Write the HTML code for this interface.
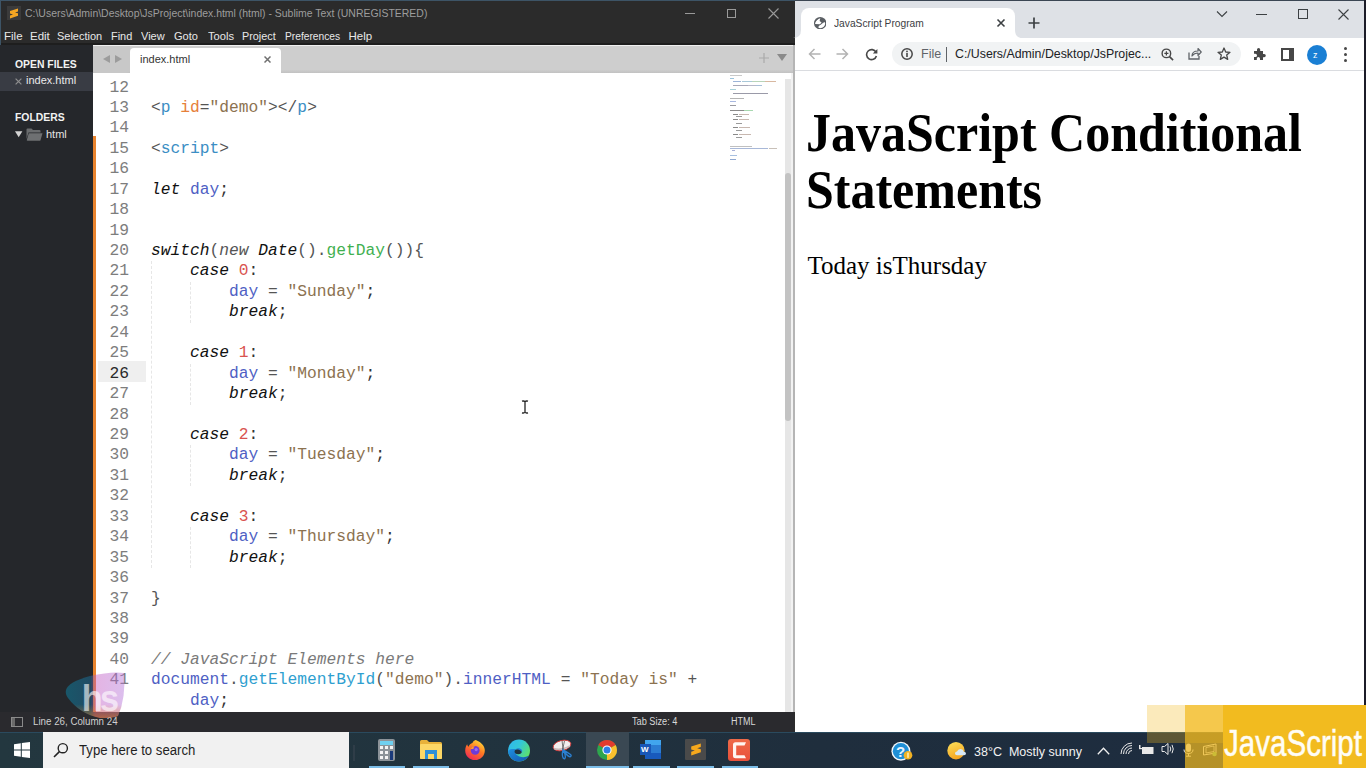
<!DOCTYPE html>
<html><head><meta charset="utf-8">
<style>
*{box-sizing:border-box}
html,body{margin:0;padding:0}
body{width:1366px;height:768px;position:relative;overflow:hidden;background:#fff;font-family:"Liberation Sans",sans-serif}
.a{position:absolute}
.t{position:absolute;white-space:pre;line-height:1}
#sub{left:0;top:0;width:795px;height:732px;background:#2b2b2b}
#menu span{position:absolute;top:0;color:#e8e8e8;font-size:11.5px;line-height:1;white-space:pre;transform-origin:0 0}
#side{left:0;top:45px;width:93px;height:667px;background:#25272b}
#tabbar{left:93px;top:45px;width:701px;height:28px;background:#cecece;border-top:1px solid #f0f0f0}
#ed{left:93px;top:73px;width:701px;height:639px;background:#fff;overflow:hidden}
.ln{position:absolute;left:0;width:36px;text-align:right;font-family:"Liberation Mono",monospace;font-size:16.25px;color:#7d7d7d;white-space:pre;line-height:20px}
.cl{position:absolute;left:58px;font-family:"Liberation Mono",monospace;font-size:16.25px;color:#333;white-space:pre;line-height:20px}
.kw{font-style:italic;color:#111}
.ng{font-style:italic;color:#555}
.tg{color:#3b8ec4}
.at{color:#e6803a}
.st{color:#8c7250}
.fn{color:#3fb050}
.vr{color:#4f5fc4}
.nm{color:#d9534f}
.cm{color:#7a7a7a;font-style:italic}
.pn{color:#555}
.gf{color:#2f9fd0}
#status{left:0;top:712px;width:794px;height:20px;background:#2a2a2e}
#chr{left:795px;top:0;width:571px;height:732px;background:#fff}
#task{left:0;top:732px;width:1366px;height:36px;background:linear-gradient(90deg,#23373f 0%,#21333e 35%,#1f2e3d 60%,#1d2c40 100%)}
</style></head>
<body>
<!-- ============ SUBLIME ============ -->
<div id="sub" class="a">
  <div class="a" style="left:0;top:0;width:795px;height:1px;background:#3d5466"></div>
  <div class="a" style="left:0;top:0;width:1px;height:732px;background:#3d5466"></div>
  <!-- icon -->
  <div class="a" style="left:7px;top:6px;width:14px;height:14px;background:#3b3b3b"></div>
  <svg class="a" style="left:9px;top:8px" width="10" height="11" viewBox="0 0 10 11"><path d="M1 3 L9 0.4 L9 3.4 L6 4.4 L9 5.2 L9 7.8 L1 10.4 L1 7.4 L4 6.4 L1 5.6 Z" fill="#f5a623"/></svg>
  <div class="t" style="left:24.5px;top:8px;font-size:11.5px;color:#9d9d9d;transform:scaleX(0.909);transform-origin:0 0">C:\Users\Admin\Desktop\JsProject\index.html (html) - Sublime Text (UNREGISTERED)</div>
  <!-- window controls -->
  <div class="a" style="left:685px;top:13px;width:10px;height:1px;background:#9a9a9a"></div>
  <div class="a" style="left:727px;top:9px;width:9px;height:9px;border:1px solid #9a9a9a"></div>
  <svg class="a" style="left:768px;top:8px" width="11" height="11" viewBox="0 0 11 11"><path d="M0.5 0.5 L10.5 10.5 M10.5 0.5 L0.5 10.5" stroke="#9a9a9a" stroke-width="1.1"/></svg>
  <!-- menu -->
  <div id="menu" class="a" style="left:0;top:30.5px;width:400px;height:12px">
    <span style="left:4px">File</span><span style="left:30px">Edit</span><span style="left:57px;transform:scaleX(0.955)">Selection</span><span style="left:111px;transform:scaleX(0.95)">Find</span><span style="left:141px;transform:scaleX(0.96)">View</span><span style="left:174px;transform:scaleX(0.96)">Goto</span><span style="left:208px;transform:scaleX(0.97)">Tools</span><span style="left:242px;transform:scaleX(0.94)">Project</span><span style="left:284.5px;transform:scaleX(0.89)">Preferences</span><span style="left:348.5px;transform:scaleX(1)">Help</span>
  </div>
  <div class="a" style="left:1px;top:43px;width:794px;height:2px;background:#1e1e1e"></div>
  <!-- sidebar -->
  <div id="side" class="a">
    <div class="t" style="left:15px;top:14.5px;font-size:10.4px;font-weight:bold;color:#f2f2f2">OPEN FILES</div>
    <div class="a" style="left:0;top:26.5px;width:93px;height:19px;background:#393c44"></div>
    <svg class="a" style="left:15px;top:32.5px" width="7" height="7" viewBox="0 0 7 7"><path d="M0.6 0.6 L6.4 6.4 M6.4 0.6 L0.6 6.4" stroke="#8f8f8f" stroke-width="1.2"/></svg>
    <div class="t" style="left:26px;top:30px;font-size:11px;color:#eaeaea">index.html</div>
    <div class="t" style="left:15px;top:67.5px;font-size:10.4px;font-weight:bold;color:#f2f2f2">FOLDERS</div>
    <svg class="a" style="left:15px;top:85.5px" width="8" height="7" viewBox="0 0 8 7"><path d="M0 0.3 L7.4 0.3 L3.7 6.3 Z" fill="#d4d4d4"/></svg>
    <svg class="a" style="left:26px;top:83px" width="17" height="13" viewBox="0 0 17 13"><path d="M0.5 1.5 Q0.5 0.5 1.5 0.5 L5.5 0.5 L7 2 L13.5 2 Q14.5 2 14.5 3 L14.5 4.5 L2.5 4.5 L0.5 11 Z" fill="#6a6c6e"/><path d="M2.8 5.2 L16.5 5.2 L14.5 12.2 Q14.3 12.8 13.5 12.8 L1.5 12.8 Q0.6 12.8 0.8 12 Z" fill="#6e7072"/></svg>
    <div class="t" style="left:46px;top:84px;font-size:11px;color:#e4e4e4">html</div>
  </div>
  <!-- tab bar -->
  <div id="tabbar" class="a">
    <div class="a" style="left:0;top:24px;width:701px;height:3px;background:linear-gradient(#cccccc,#c2c2c2)"></div>
    <div class="a" style="left:0;top:0;width:37px;height:27px;background:#c8c8c8;border-radius:0 0 4px 4px"></div>
    <svg class="a" style="left:9.5px;top:9px" width="19" height="8" viewBox="0 0 19 8"><path d="M0 4 L7 0 L7 8 Z M12 0 L19 4 L12 8 Z" fill="#9c9c9c"/></svg>
    <div class="a" style="left:37px;top:2px;width:151px;height:25px;background:#fff;border-radius:4px 4px 0 0"></div>
    <div class="t" style="left:47px;top:8px;font-size:11px;color:#333">index.html</div>
    <svg class="a" style="left:171px;top:10px" width="7" height="7" viewBox="0 0 7 7"><path d="M0.5 0.5 L6.5 6.5 M6.5 0.5 L0.5 6.5" stroke="#707070" stroke-width="1.5"/></svg>
    <svg class="a" style="left:666px;top:7px" width="10" height="10" viewBox="0 0 10 10"><path d="M5 0 V10 M0 5 H10" stroke="#aaa" stroke-width="1.2"/></svg>
    <svg class="a" style="left:684px;top:8px" width="10" height="8" viewBox="0 0 10 8"><path d="M0 0 H10 L5 7 Z" fill="#8a8a8a"/></svg>
  </div>
  <!-- editor -->
  <div id="ed" class="a">
    <div class="a" style="left:4.5px;top:288.06px;width:48.5px;height:20.5px;background:#efefef"></div>
    <div class="a" style="left:58px;top:188.46px;width:0;height:306.60px;border-left:1px dashed #e6e6e6"></div>
    <div class="a" style="left:97px;top:208.90px;width:0;height:40.88px;border-left:1px dashed #e6e6e6"></div>
    <div class="a" style="left:97px;top:290.66px;width:0;height:40.88px;border-left:1px dashed #e6e6e6"></div>
    <div class="a" style="left:97px;top:372.42px;width:0;height:40.88px;border-left:1px dashed #e6e6e6"></div>
    <div class="a" style="left:97px;top:454.18px;width:0;height:40.88px;border-left:1px dashed #e6e6e6"></div>
    <div class="ln" style="top:4.50px;color:#7d7d7d">12</div>
    <div class="ln" style="top:24.94px;color:#7d7d7d">13</div>
    <div class="cl" style="top:24.94px"><span class="pn">&lt;</span><span class="tg">p</span> <span class="at">id</span><span class="pn">=</span><span class="st">"demo"</span><span class="pn">&gt;&lt;/</span><span class="tg">p</span><span class="pn">&gt;</span></div>
    <div class="ln" style="top:45.38px;color:#7d7d7d">14</div>
    <div class="ln" style="top:65.82px;color:#7d7d7d">15</div>
    <div class="cl" style="top:65.82px"><span class="pn">&lt;</span><span class="tg">script</span><span class="pn">&gt;</span></div>
    <div class="ln" style="top:86.26px;color:#7d7d7d">16</div>
    <div class="ln" style="top:106.70px;color:#7d7d7d">17</div>
    <div class="cl" style="top:106.70px"><span class="kw">let</span> <span class="vr">day</span>;</div>
    <div class="ln" style="top:127.14px;color:#7d7d7d">18</div>
    <div class="ln" style="top:147.58px;color:#7d7d7d">19</div>
    <div class="ln" style="top:168.02px;color:#7d7d7d">20</div>
    <div class="cl" style="top:168.02px"><span class="kw">switch</span><span class="pn">(</span><span class="ng">new</span> <span class="kw">Date</span><span class="pn">().</span><span class="fn">getDay</span><span class="pn">()){</span></div>
    <div class="ln" style="top:188.46px;color:#7d7d7d">21</div>
    <div class="cl" style="top:188.46px">    <span class="kw">case</span> <span class="nm">0</span>:</div>
    <div class="ln" style="top:208.90px;color:#7d7d7d">22</div>
    <div class="cl" style="top:208.90px">        <span class="vr">day</span> <span class="pn">=</span> <span class="st">"Sunday"</span>;</div>
    <div class="ln" style="top:229.34px;color:#7d7d7d">23</div>
    <div class="cl" style="top:229.34px">        <span class="kw">break</span>;</div>
    <div class="ln" style="top:249.78px;color:#7d7d7d">24</div>
    <div class="ln" style="top:270.22px;color:#7d7d7d">25</div>
    <div class="cl" style="top:270.22px">    <span class="kw">case</span> <span class="nm">1</span>:</div>
    <div class="ln" style="top:290.66px;color:#2a2a2a">26</div>
    <div class="cl" style="top:290.66px">        <span class="vr">day</span> <span class="pn">=</span> <span class="st">"Monday"</span>;</div>
    <div class="ln" style="top:311.10px;color:#7d7d7d">27</div>
    <div class="cl" style="top:311.10px">        <span class="kw">break</span>;</div>
    <div class="ln" style="top:331.54px;color:#7d7d7d">28</div>
    <div class="ln" style="top:351.98px;color:#7d7d7d">29</div>
    <div class="cl" style="top:351.98px">    <span class="kw">case</span> <span class="nm">2</span>:</div>
    <div class="ln" style="top:372.42px;color:#7d7d7d">30</div>
    <div class="cl" style="top:372.42px">        <span class="vr">day</span> <span class="pn">=</span> <span class="st">"Tuesday"</span>;</div>
    <div class="ln" style="top:392.86px;color:#7d7d7d">31</div>
    <div class="cl" style="top:392.86px">        <span class="kw">break</span>;</div>
    <div class="ln" style="top:413.30px;color:#7d7d7d">32</div>
    <div class="ln" style="top:433.74px;color:#7d7d7d">33</div>
    <div class="cl" style="top:433.74px">    <span class="kw">case</span> <span class="nm">3</span>:</div>
    <div class="ln" style="top:454.18px;color:#7d7d7d">34</div>
    <div class="cl" style="top:454.18px">        <span class="vr">day</span> <span class="pn">=</span> <span class="st">"Thursday"</span>;</div>
    <div class="ln" style="top:474.62px;color:#7d7d7d">35</div>
    <div class="cl" style="top:474.62px">        <span class="kw">break</span>;</div>
    <div class="ln" style="top:495.06px;color:#7d7d7d">36</div>
    <div class="ln" style="top:515.50px;color:#7d7d7d">37</div>
    <div class="cl" style="top:515.50px"><span class="pn">}</span></div>
    <div class="ln" style="top:535.94px;color:#7d7d7d">38</div>
    <div class="ln" style="top:556.38px;color:#7d7d7d">39</div>
    <div class="ln" style="top:576.82px;color:#7d7d7d">40</div>
    <div class="cl" style="top:576.82px"><span class="cm">// JavaScript Elements here</span></div>
    <div class="ln" style="top:597.26px;color:#7d7d7d">41</div>
    <div class="cl" style="top:597.26px"><span class="vr">document</span><span class="pn">.</span><span class="gf">getElementById</span><span class="pn">(</span><span class="st">"demo"</span><span class="pn">).</span><span class="vr">innerHTML</span> <span class="pn">=</span> <span class="st">"Today is"</span> <span class="pn">+</span></div>
    <div class="cl" style="top:617.70px">    <span class="vr">day</span>;</div>
  </div>
  <!-- minimap -->
  <div class="a" style="left:730px;top:75px;width:12px;height:1px;background:#c9c9c9"></div>
  <div class="a" style="left:730px;top:78px;width:4px;height:1px;background:#9cc4dc"></div>
  <div class="a" style="left:733px;top:81px;width:8px;height:1px;background:#9cb4d8"></div>
  <div class="a" style="left:742px;top:81px;width:10px;height:1px;background:#a8c8d8"></div>
  <div class="a" style="left:752px;top:81px;width:13px;height:1px;background:#b8d4b8"></div>
  <div class="a" style="left:765px;top:81px;width:11px;height:1px;background:#d8b8a0"></div>
  <div class="a" style="left:733px;top:85px;width:15px;height:1px;background:#a8a8b8"></div>
  <div class="a" style="left:748px;top:85px;width:8px;height:1px;background:#b8b8c8"></div>
  <div class="a" style="left:756px;top:85px;width:6px;height:1px;background:#a8c0d8"></div>
  <div class="a" style="left:730px;top:89px;width:6px;height:1px;background:#a8d0d8"></div>
  <div class="a" style="left:733px;top:93px;width:35px;height:1px;background:#9a9aa8"></div>
  <div class="a" style="left:730px;top:98px;width:14px;height:1px;background:#b4b4b4"></div>
  <div class="a" style="left:730px;top:101px;width:6px;height:1px;background:#a8b8e0"></div>
  <div class="a" style="left:730px;top:105px;width:6px;height:1px;background:#9a9aa0"></div>
  <div class="a" style="left:730px;top:110px;width:14px;height:1px;background:#8a8a8a"></div>
  <div class="a" style="left:744px;top:110px;width:9px;height:1px;background:#a8d8b0"></div>
  <div class="a" style="left:733px;top:114px;width:5px;height:1px;background:#8a8a8a"></div>
  <div class="a" style="left:739px;top:114px;width:10px;height:1px;background:#c8b8b0"></div>
  <div class="a" style="left:736px;top:116px;width:6px;height:1px;background:#9a9a9a"></div>
  <div class="a" style="left:733px;top:119px;width:5px;height:1px;background:#8a8a8a"></div>
  <div class="a" style="left:739px;top:119px;width:10px;height:1px;background:#c8b8b0"></div>
  <div class="a" style="left:736px;top:123px;width:6px;height:1px;background:#9a9a9a"></div>
  <div class="a" style="left:733px;top:127px;width:5px;height:1px;background:#8a8a8a"></div>
  <div class="a" style="left:739px;top:127px;width:11px;height:1px;background:#c8b8b0"></div>
  <div class="a" style="left:736px;top:130px;width:6px;height:1px;background:#9a9a9a"></div>
  <div class="a" style="left:733px;top:134px;width:5px;height:1px;background:#8a8a8a"></div>
  <div class="a" style="left:739px;top:134px;width:12px;height:1px;background:#c8b8b0"></div>
  <div class="a" style="left:736px;top:137px;width:6px;height:1px;background:#9a9a9a"></div>
  <div class="a" style="left:730px;top:146px;width:22px;height:1px;background:#c0c0c0"></div>
  <div class="a" style="left:730px;top:148px;width:38px;height:1px;background:#a8b8d8"></div>
  <div class="a" style="left:769px;top:148px;width:8px;height:1px;background:#c8c0b8"></div>
  <div class="a" style="left:732px;top:150px;width:3px;height:1px;background:#a8b0d8"></div>
  <div class="a" style="left:730px;top:155px;width:7px;height:1px;background:#a8c0e0"></div>
  <div class="a" style="left:730px;top:159px;width:6px;height:1px;background:#90a8d0"></div>
  <svg class="a" style="left:521px;top:400px" width="8" height="14" viewBox="0 0 8 14"><path d="M1 1.2 Q3 0.6 4 1.6 Q5 0.6 7 1.2 M4 1.6 V12.4 M1 12.8 Q3 13.4 4 12.4 Q5 13.4 7 12.8" stroke="#222" stroke-width="1.3" fill="none"/></svg>
  <!-- orange bar -->
  <div class="a" style="left:93px;top:136px;width:3px;height:576px;background:#e8832e"></div>
  <!-- right border -->
  <div class="a" style="left:785px;top:79px;width:6px;height:633px;background:#e6e6e6"></div>
  <div class="a" style="left:785px;top:173px;width:6px;height:248px;background:#c3c3c3;border-radius:3px"></div>
  <div class="a" style="left:791px;top:73px;width:2px;height:639px;background:#f2f2f2"></div>
  <div class="a" style="left:793px;top:45px;width:2px;height:667px;background:#b5b5b5"></div>
  <!-- status -->
  <div id="status" class="a">
    <div class="a" style="left:11px;top:5px;width:12px;height:10px;border:1px solid #8a8a8a"></div>
    <div class="a" style="left:12px;top:6px;width:3px;height:8px;background:#6a6a6a"></div>
    <div class="t" style="left:32.5px;top:5px;font-size:10px;color:#d0d0d0;transform:scaleX(0.975);transform-origin:0 0">Line 26, Column 24</div>
    <div class="t" style="left:631.5px;top:5px;font-size:10px;color:#d8d8d8;transform:scaleX(0.918);transform-origin:0 0">Tab Size: 4</div>
    <div class="t" style="left:731px;top:5px;font-size:10px;color:#d8d8d8;transform:scaleX(0.9);transform-origin:0 0">HTML</div>
  </div>
</div>

<!-- ============ CHROME ============ -->
<div id="chr" class="a">
  <div class="a" style="left:0;top:0;width:571px;height:1px;background:#3b4653"></div>
  <div class="a" style="left:0;top:1px;width:571px;height:37px;background:#dee1e6"></div>
    <!-- active tab -->
  <div class="a" style="left:6px;top:8px;width:214px;height:31px;background:#fff;border-radius:8px 8px 0 0"></div>
  <svg class="a" style="left:-2px;top:30px" width="8" height="8" viewBox="0 0 8 8"><path d="M0 8 Q8 8 8 0 L8 8 Z" fill="#fff"/></svg>
  <svg class="a" style="left:220px;top:30px" width="8" height="8" viewBox="0 0 8 8"><path d="M0 0 Q0 8 8 8 L0 8 Z" fill="#fff"/></svg>
  <!-- globe -->
  <svg class="a" style="left:18.6px;top:17.1px" width="12.4" height="12.4" viewBox="0 0 12.4 12.4"><defs><clipPath id="gc"><circle cx="6.2" cy="6.2" r="5.0"/></clipPath></defs><circle cx="6.2" cy="6.2" r="6.2" fill="#5a5e63"/><g clip-path="url(#gc)" fill="#fff"><path d="M0.5 6.1 L2.7 3.5 L4.4 2.1 L6.4 0.8 L5.6 4.1 L7.6 5.5 L5.9 7.2 L0.5 7.0 Z"/><path d="M10.5 4.9 L12 7.2 L9.9 10.4 L6.4 12 L4.4 11 L4.7 8.9 L6.7 7.8 L8.2 6.4 Z"/></g></svg>
  <div class="t" style="left:39px;top:18px;font-size:11px;color:#3c4043;transform:scaleX(0.93);transform-origin:0 0">JavaScript Program</div>
  <svg class="a" style="left:201px;top:18px" width="10" height="10" viewBox="0 0 10 10"><path d="M1.5 1.5 L8.5 8.5 M8.5 1.5 L1.5 8.5" stroke="#3c4043" stroke-width="1.6"/></svg>
  <svg class="a" style="left:233px;top:17px" width="12" height="12" viewBox="0 0 12 12"><path d="M6 0.5 V11.5 M0.5 6 H11.5" stroke="#3c4043" stroke-width="1.7"/></svg>
  <!-- window controls -->
  <svg class="a" style="left:421px;top:10px" width="12" height="8" viewBox="0 0 12 8"><path d="M1 1.5 L6 6.5 L11 1.5" stroke="#3c4043" stroke-width="1.1" fill="none"/></svg>
  <div class="a" style="left:461px;top:14px;width:11px;height:1px;background:#3c4043"></div>
  <div class="a" style="left:503px;top:9px;width:10px;height:10px;border:1px solid #3c4043"></div>
  <svg class="a" style="left:543px;top:9px" width="11" height="11" viewBox="0 0 11 11"><path d="M0.5 0.5 L10.5 10.5 M10.5 0.5 L0.5 10.5" stroke="#3c4043" stroke-width="1.1"/></svg>
  <!-- toolbar -->
  <div class="a" style="left:0;top:38px;width:571px;height:32px;background:#fff"></div>
  <div class="a" style="left:0;top:70px;width:571px;height:1px;background:#dadce0"></div>
  <svg class="a" style="left:13px;top:48px" width="13" height="12" viewBox="0 0 13 12"><path d="M12.5 6 H1.5 M6.5 1 L1.5 6 L6.5 11" stroke="#b3b3b3" stroke-width="1.5" fill="none"/></svg>
  <svg class="a" style="left:41px;top:48px" width="13" height="12" viewBox="0 0 13 12"><path d="M0.5 6 H11.5 M6.5 1 L11.5 6 L6.5 11" stroke="#b3b3b3" stroke-width="1.5" fill="none"/></svg>
  <svg class="a" style="left:70px;top:48px" width="13" height="13" viewBox="0 0 13 13"><path d="M11 4.2 A5 5 0 1 0 11.4 8" stroke="#474747" stroke-width="1.6" fill="none"/><path d="M12.4 1 V5.6 H7.8 Z" fill="#474747"/></svg>
  <div class="a" style="left:97px;top:42px;width:349px;height:24px;background:#f1f3f4;border-radius:12px"></div>
  <svg class="a" style="left:106px;top:48px" width="12" height="12" viewBox="0 0 12 12"><circle cx="6" cy="6" r="5.2" stroke="#474747" stroke-width="1.5" fill="none"/><path d="M6 5 V9" stroke="#474747" stroke-width="1.6"/><circle cx="6" cy="3.4" r="0.9" fill="#474747"/></svg>
  <div class="t" style="left:126px;top:48px;font-size:12.5px;color:#5f6368">File</div>
  <div class="a" style="left:151px;top:47px;width:1px;height:15px;background:#5f6368"></div>
  <div class="t" style="left:159.5px;top:48px;font-size:12.5px;color:#202124;transform:scaleX(0.988);transform-origin:0 0">C:/Users/Admin/Desktop/JsProjec...</div>
  <svg class="a" style="left:366px;top:48px" width="13" height="13" viewBox="0 0 14 14"><circle cx="5.8" cy="5.8" r="4.6" stroke="#474747" stroke-width="1.5" fill="none"/><path d="M9.2 9.2 L13 13" stroke="#474747" stroke-width="1.8"/><path d="M5.8 3.6 V8 M3.6 5.8 H8" stroke="#474747" stroke-width="1.3"/></svg>
  <svg class="a" style="left:393px;top:47px" width="14" height="13" viewBox="0 0 14 13"><path d="M1 5.5 V12 H11 V9" stroke="#5f6368" stroke-width="1.3" fill="none"/><path d="M4 9 C4 5.5 6.5 4 10 4 V1.5 L13.2 5 L10 8.5 V6 C7.5 6 5.5 7 4 9 Z" stroke="#5f6368" stroke-width="1.2" fill="none" stroke-linejoin="round"/></svg>
  <svg class="a" style="left:422px;top:47px" width="14" height="14" viewBox="0 0 14 14"><path d="M7 1 L8.7 5 L13 5.3 L9.7 8.1 L10.7 12.4 L7 10.1 L3.3 12.4 L4.3 8.1 L1 5.3 L5.3 5 Z" stroke="#474747" stroke-width="1.3" fill="none" stroke-linejoin="round"/></svg>
  <svg class="a" style="left:457px;top:47px" width="14" height="14" viewBox="0 0 14 14"><path d="M2 4 H5 V2.6 A1.6 1.6 0 0 1 8.2 2.6 V4 H11 V7 H12.2 A1.6 1.6 0 0 1 12.2 10.2 H11 V13 H8 V11.6 A1.6 1.6 0 0 0 4.8 11.6 V13 H2 V10 H3.4 A1.6 1.6 0 0 0 3.4 6.8 H2 Z" fill="#474747"/></svg>
  <div class="a" style="left:486px;top:48px;width:13px;height:13px;border:2px solid #474747;border-right-width:5px"></div>
  <div class="a" style="left:511.5px;top:45px;width:20px;height:20px;border-radius:50%;background:#1a7fd4"></div>
  <div class="t" style="left:518px;top:51px;font-size:9px;color:#fff">z</div>
  <div class="a" style="left:549px;top:47px;width:3px;height:3px;border-radius:50%;background:#474747"></div>
  <div class="a" style="left:549px;top:53px;width:3px;height:3px;border-radius:50%;background:#474747"></div>
  <div class="a" style="left:549px;top:59px;width:3px;height:3px;border-radius:50%;background:#474747"></div>
  <div class="a" style="left:569px;top:0;width:2px;height:732px;background:#1c1c28"></div>
  <!-- page content -->
  <div class="t" style="left:11px;top:105px;font-family:'Liberation Serif',serif;font-weight:bold;font-size:50px;color:#000;transform:scaleY(1.1);transform-origin:0 0">JavaScript Conditional</div>
  <div class="t" style="left:11px;top:161.5px;font-family:'Liberation Serif',serif;font-weight:bold;font-size:50px;color:#000;transform:scaleY(1.1);transform-origin:0 0">Statements</div>
  <div class="t" style="left:12.5px;top:253px;font-family:'Liberation Serif',serif;font-size:25px;color:#000">Today isThursday</div>

</div>

<!-- ============ TASKBAR ============ -->
<div id="task" class="a">
  <div class="a" style="left:0;top:0;width:1366px;height:1px;background:#2a4a5e"></div>
  <!-- start -->
  <svg class="a" style="left:14px;top:10px" width="16" height="16" viewBox="0 0 16 16"><path d="M0 2.2 L6.8 1.2 V7.4 H0 Z M7.8 1.05 L16 0 V7.4 H7.8 Z M0 8.4 H6.8 V14.8 L0 13.8 Z M7.8 8.4 H16 V16 L7.8 14.9 Z" fill="#fff"/></svg>
  <!-- search -->
  <div class="a" style="left:43px;top:0;width:306px;height:36px;background:#f1f1f1"></div>
  <svg class="a" style="left:53px;top:10px" width="16" height="16" viewBox="0 0 16 16"><circle cx="9.8" cy="6.2" r="4.6" stroke="#222" stroke-width="1.4" fill="none"/><path d="M6.4 9.6 L1 15" stroke="#222" stroke-width="1.6"/></svg>
  <div class="t" style="left:79px;top:11px;font-size:14px;color:#1f1f1f;transform:scaleX(0.94);transform-origin:0 0">Type here to search</div>
  <div class="a" style="left:353px;top:13px;width:2px;height:16px;background:#2f3d48"></div>
  <!-- calc -->
  <div class="a" style="left:378px;top:7px;width:17px;height:22px;background:#8c9399;border-radius:2px"></div>
  <div class="a" style="left:380px;top:9px;width:13px;height:4px;background:#6fd0f0"></div>
  <svg class="a" style="left:380px;top:14px" width="13" height="14" viewBox="0 0 13 14"><g fill="#f4f4f4"><rect x="0" y="0" width="3" height="3"/><rect x="5" y="0" width="3" height="3"/><rect x="10" y="0" width="3" height="3"/><rect x="0" y="5" width="3" height="3"/><rect x="5" y="5" width="3" height="3"/><rect x="0" y="10" width="3" height="3"/><rect x="5" y="10" width="3" height="3"/></g><rect x="10" y="5" width="3" height="9" fill="#1b3a7a"/></svg>
  <div class="a" style="left:369px;top:34px;width:36px;height:2px;background:#7bbde8"></div>
  <!-- files -->
  <svg class="a" style="left:420px;top:8px" width="22" height="19" viewBox="0 0 22 19"><path d="M0 1.5 Q0 0 1.5 0 H7 L9 2 H20.5 Q22 2 22 3.5 V17.5 Q22 19 20.5 19 H1.5 Q0 19 0 17.5 Z" fill="#e8b23a"/><rect x="0" y="4" width="22" height="15" rx="1" fill="#fcd766"/><path d="M5 19 V10 H17 V19 H14 V14 H8 V19 Z" fill="#2d8fd8"/></svg>
  <div class="a" style="left:413px;top:34px;width:36px;height:2px;background:#7bbde8"></div>
  <!-- firefox -->
  <svg class="a" style="left:464px;top:7px" width="22" height="22" viewBox="0 0 22 22"><defs><linearGradient id="ff" x1="0.8" y1="0" x2="0.2" y2="1"><stop offset="0" stop-color="#ffe03a"/><stop offset="0.45" stop-color="#ff7a22"/><stop offset="1" stop-color="#f0245a"/></linearGradient></defs><path d="M11 21 C5.5 21 1.2 16.8 1.2 11.4 C1.2 8.5 2.2 6.5 3.2 5.2 C3.4 6.4 3.8 7.2 4.6 7.8 C5.2 5.6 6.8 4.4 8.4 4 C9 2.4 10.2 1.6 11.6 1 C13.4 1.8 17 3 19.4 6.8 C20.4 8.4 20.8 10 20.8 11.4 C20.8 16.8 16.5 21 11 21 Z" fill="url(#ff)"/><circle cx="11.2" cy="11.4" r="4.4" fill="#6e3bd8"/><path d="M6.6 10 C7.4 8 9 7 11 7 C9.8 8 9.4 9 9.6 10 Z" fill="#ff9a2a"/><circle cx="12.2" cy="10.6" r="1.6" fill="#9a6cf0"/></svg>
  <!-- edge -->
  <svg class="a" style="left:508px;top:7px" width="22" height="23" viewBox="0 0 22 23"><defs><linearGradient id="eg" x1="0" y1="0" x2="1" y2="0.6"><stop offset="0" stop-color="#2fb6f0"/><stop offset="0.5" stop-color="#33c7d8"/><stop offset="1" stop-color="#5ee06a"/></linearGradient><linearGradient id="eb" x1="0" y1="0" x2="1" y2="1"><stop offset="0" stop-color="#1e90e0"/><stop offset="1" stop-color="#1356b0"/></linearGradient></defs><circle cx="11" cy="11.5" r="11" fill="url(#eg)"/><path d="M0.2 11.5 C0.5 17.8 5 22.5 11 22.5 C15.5 22.5 19 20.2 20.8 16.8 C17 18.8 12.5 18.6 9.6 16.6 C7 14.8 6.4 12.2 7.8 10.2 C4.5 9.8 1.5 10.3 0.2 11.5 Z" fill="url(#eb)"/><ellipse cx="10.2" cy="12.6" rx="3.6" ry="2.6" fill="#21333e"/><path d="M7.8 10.2 C9 9 11.5 9 13.5 10.4 C14.5 11.2 14.2 12.4 13.6 13 C13 11.6 11.6 10.4 7.8 10.2 Z" fill="#1f7fd8"/></svg>
  <!-- snipping -->
  <svg class="a" style="left:552px;top:7px" width="22" height="22" viewBox="0 0 22 22"><ellipse cx="10" cy="6.5" rx="9" ry="5" transform="rotate(-14 10 6.5)" fill="#f2eeee" stroke="#d43a3a" stroke-width="0.9"/><path d="M2 9.5 Q8 12 18 7" stroke="#c8b8b8" stroke-width="1.5" fill="none"/><path d="M10 1.5 L11.2 11 M12.5 2 L10.5 11" stroke="#444" stroke-width="0.7"/><path d="M11 11 Q9.5 17 11.5 19.5 Q13 20.5 13.4 18 Q13.2 14 11 11 Z M11 11 Q15 13 18.5 15.5 Q20 17 18 17.8 Q15.5 17.5 11 11 Z" fill="none" stroke="#2a7fd0" stroke-width="1.4"/></svg>
  <!-- chrome (active) -->
  <div class="a" style="left:586px;top:0;width:43px;height:36px;background:#3a4853"></div>
  <svg class="a" style="left:597px;top:8px" width="20" height="20" viewBox="0 0 20 20"><circle cx="10" cy="10" r="10" fill="#2ea54d"/><path d="M10 10 L1.34 5 A10 10 0 0 1 18.66 5 Z" fill="#e23b2e"/><path d="M10 10 L18.66 5 A10 10 0 0 1 10 20 Z" fill="#fbc02d"/><circle cx="10" cy="10" r="4.6" fill="#fff"/><circle cx="10" cy="10" r="3.5" fill="#2f7de8"/></svg>
  <div class="a" style="left:586px;top:34px;width:43px;height:2px;background:#7bbde8"></div>
  <!-- word -->
  <div class="a" style="left:645px;top:8px;width:16px;height:19px;background:#2b7cd3;border-radius:1px"></div>
  <div class="a" style="left:645px;top:8px;width:16px;height:5px;background:#41a5ee"></div>
  <div class="a" style="left:645px;top:21px;width:16px;height:6px;background:#185abd"></div>
  <div class="a" style="left:640px;top:12px;width:11px;height:11px;background:#1857b8"></div>
  <div class="t" style="left:641px;top:14px;font-size:8px;font-weight:bold;color:#fff">W</div>
  <div class="a" style="left:633px;top:34px;width:37px;height:2px;background:#7bbde8"></div>
  <!-- sublime -->
  <div class="a" style="left:685px;top:7px;width:21px;height:21px;background:#4a4a4a;border-radius:1px"></div>
  <svg class="a" style="left:690px;top:10px" width="12" height="15" viewBox="0 0 10 11"><path d="M1 3 L9 0.4 L9 3.4 L6 4.4 L9 5.2 L9 7.8 L1 10.4 L1 7.4 L4 6.4 L1 5.6 Z" fill="#f7a81c"/></svg>
  <div class="a" style="left:677px;top:34px;width:37px;height:2px;background:#7bbde8"></div>
  <!-- camtasia -->
  <div class="a" style="left:728px;top:7px;width:22px;height:22px;background:linear-gradient(#ee6a48,#e9503a);border-radius:3px"></div>
  <svg class="a" style="left:728px;top:7px" width="22" height="22" viewBox="0 0 22 22"><path d="M7.5 3.3 L18 3.3 L16.5 6.5 L8.2 6.5 L8.2 16.2 L16.5 16.2 L18 19.2 L7.5 19.2 Q5 19.2 5 16.7 L5 5.8 Q5 3.3 7.5 3.3 Z" fill="#fff5f0"/></svg>
  <div class="a" style="left:722px;top:34px;width:36px;height:2px;background:#7bbde8"></div>
  <!-- tray -->
  <svg class="a" style="left:891px;top:9px" width="23" height="22" viewBox="0 0 23 22"><circle cx="9.9" cy="10.2" r="9.5" fill="#f4f8fc"/><circle cx="9.9" cy="10.2" r="8.1" fill="#1f8fd6"/><text x="9.6" y="15.6" font-family="Liberation Sans" font-weight="bold" font-size="15" fill="#e8f4ff" text-anchor="middle">?</text><circle cx="17" cy="14.3" r="4.3" fill="#f3b223"/><rect x="16.3" y="11.6" width="1.4" height="5.2" fill="#fff2c0"/></svg>
  <svg class="a" style="left:947px;top:9px" width="22" height="20" viewBox="0 0 22 20"><defs><linearGradient id="sun" x1="0" y1="0" x2="0.4" y2="1"><stop offset="0" stop-color="#fde15a"/><stop offset="1" stop-color="#f5a623"/></linearGradient></defs><circle cx="9" cy="9.7" r="8.7" fill="url(#sun)"/><path d="M10 14.2 Q8 14.2 8 12.4 Q8 10.6 10 10.6 Q10.8 8 13.5 8 Q16.4 8.2 16.8 10.8 Q19 11 19 12.6 Q19 14.2 17 14.2 Z" fill="#d8e8f4"/></svg>
  <div class="t" style="left:974px;top:13px;font-size:13.5px;color:#f2f2f2;transform:scaleX(0.927);transform-origin:0 0">38°C  Mostly sunny</div>
  <svg class="a" style="left:1097px;top:14.5px" width="13" height="8" viewBox="0 0 13 8"><path d="M0.8 7.2 L6.5 1.2 L12.2 7.2" stroke="#f0f0f0" stroke-width="1.3" fill="none"/></svg>
  <svg class="a" style="left:1120px;top:10px" width="13" height="13" viewBox="0 0 13 13"><path d="M1 12 A11 11 0 0 1 12 1 M3.5 12 A8.5 8.5 0 0 1 12 3.5 M6 12 A6 6 0 0 1 12 6 M8.5 12 A3.5 3.5 0 0 1 12 8.5" stroke="#e8e8e8" stroke-width="1" fill="none"/></svg>
  <svg class="a" style="left:1139px;top:13px" width="15" height="10" viewBox="0 0 15 10"><rect x="3" y="2" width="11.5" height="7" fill="#e8e8e8"/><rect x="0" y="0" width="1.5" height="4" fill="#e8e8e8"/><rect x="0" y="3" width="4" height="1.2" fill="#e8e8e8"/></svg>
  <svg class="a" style="left:1161px;top:10px" width="14" height="14" viewBox="0 0 14 14"><path d="M1 4.5 H3.5 L7 1.5 V12.5 L3.5 9.5 H1 Z" stroke="#e8e8e8" stroke-width="1" fill="none"/><path d="M9 4.5 Q10.5 7 9 9.5 M11 2.8 Q13.5 7 11 11.2" stroke="#e8e8e8" stroke-width="1" fill="none"/></svg>

  <svg class="a" style="left:1183px;top:11px" width="11" height="14" viewBox="0 0 11 14"><rect x="3" y="0.5" width="5" height="8.5" rx="2.5" fill="#e8e8e8"/><path d="M1 6.5 Q1 10.5 5.5 10.5 Q10 10.5 10 6.5 M5.5 10.5 V13 M3 13.2 H8" stroke="#e8e8e8" stroke-width="1" fill="none"/></svg>
  <svg class="a" style="left:1202px;top:11px" width="16" height="14" viewBox="0 0 16 14"><path d="M1.5 3.5 L14 1 V10 L1.5 12 Z" stroke="#e8e8e8" stroke-width="1" fill="none"/><path d="M4 4.5 L12 3 V8.5 L4 10 Z" stroke="#e8e8e8" stroke-width="0.8" fill="none"/><circle cx="12.5" cy="11" r="2.3" fill="#6cc070"/></svg>
</div>

<!-- ============ OVERLAYS ============ -->
<svg class="a" style="left:60px;top:668px" width="70" height="56" viewBox="0 0 70 56"><defs><linearGradient id="hsg" x1="0" y1="0" x2="1" y2="0"><stop offset="0" stop-color="#0a92b8"/><stop offset="0.42" stop-color="#1a78a8"/><stop offset="0.5" stop-color="#c458c0"/><stop offset="1" stop-color="#b070d8"/></linearGradient><linearGradient id="hsb" x1="0" y1="0" x2="0" y2="1"><stop offset="0.7" stop-color="#f08a20" stop-opacity="0"/><stop offset="1" stop-color="#f08a20" stop-opacity="1"/></linearGradient></defs><path d="M6 22 Q8 14 30 8 Q52 3 64 5 Q66 30 58 48 Q54 50 40 50 Q20 46 8 30 Q5 26 6 22 Z" fill="url(#hsg)" opacity="0.45"/><path d="M6 22 Q8 14 30 8 Q52 3 64 5 Q66 30 58 48 Q54 50 40 50 Q20 46 8 30 Q5 26 6 22 Z" fill="url(#hsb)" opacity="0.5"/><text x="23" y="43" font-family="Liberation Sans" font-weight="bold" font-size="36" fill="#fff" opacity="0.6" letter-spacing="-3" transform="scale(0.95,1)">hs</text></svg>
<div class="a" style="left:1147px;top:705px;width:76px;height:37.5px;background:rgba(242,187,31,0.3)"></div>
<div class="a" style="left:1185px;top:705px;width:38px;height:63px;background:rgba(242,187,31,0.714)"></div>
<div class="a" style="left:1223px;top:705px;width:143px;height:63px;background:#f2bb1f"></div>
<div class="t" style="left:1224px;top:725.5px;font-size:36.5px;color:#fffdf5;-webkit-text-stroke:0.5px #fffdf5;transform:scaleX(0.81);transform-origin:0 0">JavaScript</div>
</body></html>
